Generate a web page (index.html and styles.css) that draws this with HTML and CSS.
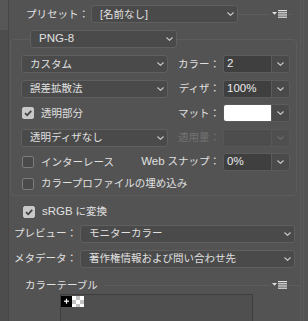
FILE: index.html
```html
<!DOCTYPE html>
<html lang="ja">
<head>
    <meta charset="UTF-8">
    <meta name="viewport" content="width=device-width, initial-scale=1.0">
    <title>最適化設定</title>
    <link rel="stylesheet" href="styles.css">
</head>
<body>
    <div class="edge-left"><div class="thumb"></div></div>

    <div class="main">
        <!-- プリセット -->
        <div class="preset-row">
            <span class="label preset-label">プリセット：</span>
            <div class="select preset-select">
                <span>[名前なし]</span>
                <svg class="chev" width="7" height="4" viewBox="0 0 7 4"><polyline points="0.5,0.5 3.5,3.3 6.5,0.5"/></svg>
            </div>
            <div class="rule rule-top">
                <svg class="menu" width="15" height="8" viewBox="0 0 15 8"><polygon points="0,2 5,2 2.5,4.8"/><rect x="6" y="0" width="9" height="1.2"/><rect x="6" y="2.2" width="9" height="1.2"/><rect x="6" y="4.4" width="9" height="1.2"/><rect x="6" y="6.6" width="9" height="1.2"/></svg>
            </div>
        </div>

        <fieldset class="group">
            <legend class="select format-select">
                <span class="latin">PNG-8</span>
                <svg class="chev" width="7" height="4" viewBox="0 0 7 4"><polyline points="0.5,0.5 3.5,3.3 6.5,0.5"/></svg>
            </legend>
            <div class="group-body">
                <div class="row">
                    <div class="select wide">
                        <span>カスタム</span>
                        <svg class="chev" width="7" height="4" viewBox="0 0 7 4"><polyline points="0.5,0.5 3.5,3.3 6.5,0.5"/></svg>
                    </div>
                    <span class="label">カラー：</span>
                    <div class="combo">
                        <span class="field latin">2</span>
                        <span class="btn"><svg class="chev" width="7" height="4" viewBox="0 0 7 4"><polyline points="0.5,0.5 3.5,3.3 6.5,0.5"/></svg></span>
                    </div>
                </div>
                <div class="row">
                    <div class="select wide">
                        <span>誤差拡散法</span>
                        <svg class="chev" width="7" height="4" viewBox="0 0 7 4"><polyline points="0.5,0.5 3.5,3.3 6.5,0.5"/></svg>
                    </div>
                    <span class="label">ディザ：</span>
                    <div class="combo">
                        <span class="field latin">100%</span>
                        <span class="btn"><svg class="chev" width="7" height="4" viewBox="0 0 7 4"><polyline points="0.5,0.5 3.5,3.3 6.5,0.5"/></svg></span>
                    </div>
                </div>
                <div class="row">
                    <div class="check-item wide">
                        <span class="check on"><svg width="10" height="10" viewBox="0 0 10 10"><polyline points="2,5.2 4.2,7.3 8.2,2.8"/></svg></span>
                        <span>透明部分</span>
                    </div>
                    <span class="label">マット：</span>
                    <div class="combo">
                        <span class="field matte"></span>
                        <span class="btn"><svg class="chev" width="7" height="4" viewBox="0 0 7 4"><polyline points="0.5,0.5 3.5,3.3 6.5,0.5"/></svg></span>
                    </div>
                </div>
                <div class="row">
                    <div class="select wide">
                        <span>透明ディザなし</span>
                        <svg class="chev" width="7" height="4" viewBox="0 0 7 4"><polyline points="0.5,0.5 3.5,3.3 6.5,0.5"/></svg>
                    </div>
                    <span class="label disabled">適用量：</span>
                    <div class="combo disabled">
                        <span class="field"></span>
                        <span class="btn"><svg class="chev" width="7" height="4" viewBox="0 0 7 4"><polyline points="0.5,0.5 3.5,3.3 6.5,0.5"/></svg></span>
                    </div>
                </div>
                <div class="row">
                    <div class="check-item indent">
                        <span class="check"></span>
                        <span>インターレース</span>
                    </div>
                    <span class="label"><span class="latin">Web</span> スナップ：</span>
                    <div class="combo">
                        <span class="field latin">0%</span>
                        <span class="btn"><svg class="chev" width="7" height="4" viewBox="0 0 7 4"><polyline points="0.5,0.5 3.5,3.3 6.5,0.5"/></svg></span>
                    </div>
                </div>
                <div class="row row-tight">
                    <div class="check-item">
                        <span class="check"></span>
                        <span>カラープロファイルの埋め込み</span>
                    </div>
                </div>
            </div>
        </fieldset>

        <div class="row srgb-row">
            <div class="check-item">
                <span class="check on"><svg width="10" height="10" viewBox="0 0 10 10"><polyline points="2,5.2 4.2,7.3 8.2,2.8"/></svg></span>
                <span><span class="latin">sRGB</span> に変換</span>
            </div>
        </div>

        <div class="row field-row preview-row">
            <span class="label field-label">プレビュー：</span>
            <div class="select long">
                <span>モニターカラー</span>
                <svg class="chev" width="7" height="4" viewBox="0 0 7 4"><polyline points="0.5,0.5 3.5,3.3 6.5,0.5"/></svg>
            </div>
        </div>
        <div class="row field-row meta-row">
            <span class="label field-label">メタデータ：</span>
            <div class="select long">
                <span>著作権情報および問い合わせ先</span>
                <svg class="chev" width="7" height="4" viewBox="0 0 7 4"><polyline points="0.5,0.5 3.5,3.3 6.5,0.5"/></svg>
            </div>
        </div>

        <div class="table-head">
            <span class="table-title">カラーテーブル</span>
            <div class="rule rule-table">
                <svg class="menu" width="15" height="8" viewBox="0 0 15 8"><polygon points="0,2 5,2 2.5,4.8"/><rect x="6" y="0" width="9" height="1.2"/><rect x="6" y="2.2" width="9" height="1.2"/><rect x="6" y="4.4" width="9" height="1.2"/><rect x="6" y="6.6" width="9" height="1.2"/></svg>
            </div>
        </div>
        <div class="color-table">
            <span class="swatch black"><svg width="11" height="11" viewBox="0 0 11 11"><rect x="3" y="4.6" width="5" height="1.2"/><rect x="4.9" y="2.7" width="1.2" height="5"/></svg></span>
            <span class="swatch clear"></span>
        </div>
    </div>

    <div class="edge-right"></div>
</body>
</html>
```

FILE: styles.css
```css
* {
    box-sizing: border-box;
    margin: 0;
    padding: 0;
}

body {
    width: 308px;
    height: 321px;
    overflow: hidden;
    display: flex;
    background: #535353;
    color: #e0e0e0;
    font-family: "Liberation Sans", "Noto Sans CJK JP", sans-serif;
    font-size: 10.5px;
    line-height: 1;
}

.latin {
    font-size: 11.5px;
}

.edge-left {
    width: 9px;
    flex: none;
    background: #4d4d4d;
    border-right: 1px solid #464646;
}

.edge-left .thumb {
    height: 30px;
    background: #575757;
}

.edge-right {
    width: 8px;
    flex: none;
    border-left: 1px solid #5b5b5b;
    background: linear-gradient(to right, transparent 2px, #5a5a5a 2px, #5a5a5a 3px, transparent 3px);
}

.main {
    flex: 1;
    min-width: 0;
    padding-top: 5px;
}

/* generic controls */
.label {
    white-space: nowrap;
}

.label.disabled {
    color: #727272;
}

.select {
    display: flex;
    align-items: center;
    justify-content: space-between;
    height: 18px;
    padding: 0 3px 0 8px;
    background: #4a4a4a;
    border: 1px solid #5f5f5f;
    border-radius: 3px;
    white-space: nowrap;
}

.chev {
    flex: none;
    fill: none;
    stroke: #cfcfcf;
    stroke-width: 1.1;
}

.combo {
    display: flex;
    width: 67px;
    height: 18px;
    flex: none;
    border: 1px solid #5b5b5b;
    border-radius: 3px;
    overflow: hidden;
}

.combo .field {
    flex: 1;
    display: flex;
    align-items: center;
    padding-left: 3px;
    background: #3f3f3f;
    color: #ececec;
}

.combo .field.matte {
    background: #ffffff;
}

.combo .btn {
    width: 18px;
    flex: none;
    display: flex;
    align-items: center;
    justify-content: center;
    background: #4a4a4a;
    border-left: 1px solid #5b5b5b;
}

.combo.disabled {
    border-color: #575757;
}

.combo.disabled .field {
    background: #4d4d4d;
}

.combo.disabled .btn {
    border-left-color: #575757;
    background: #4f4f4f;
}

.combo.disabled .chev {
    stroke: #6c6c6c;
}

.check-item {
    display: flex;
    align-items: center;
    gap: 7px;
    white-space: nowrap;
}

.check {
    width: 12px;
    height: 12px;
    flex: none;
    border: 1px solid #7c7c7c;
    border-radius: 2px;
    background: #4a4a4a;
}

.check.on {
    display: flex;
    align-items: center;
    justify-content: center;
    background: #c8c8c8;
    border-color: #c8c8c8;
}

.check.on svg {
    fill: none;
    stroke: #424242;
    stroke-width: 1.8;
}

/* rule with panel menu */
.rule {
    display: flex;
    align-items: center;
}

.rule::before,
.rule::after {
    content: "";
    height: 1px;
    background: #5d5d5d;
}

.rule::before {
    flex: 1;
}

.rule::after {
    width: 4px;
}

.menu {
    flex: none;
    fill: #e2e2e2;
    margin: 0 1px 0 2px;
}

/* preset */
.preset-row {
    display: flex;
    align-items: center;
    height: 18px;
}

.preset-label {
    width: 80px;
    text-align: right;
    margin-right: 2px;
}

.preset-select {
    width: 147px;
    flex: none;
}

.rule-top {
    flex: 1;
    margin: 0 8px 0 1px;
}

/* optimize group */
.group {
    margin: 7px 3px 0 1px;
    padding: 7px 6px 2.5px 10px;
    min-width: 0;
    border: 1px solid #5c5c5c;
    border-radius: 4px;
}

.format-select {
    width: 147px;
    margin-left: 9px;
}

.group-body {
    display: flex;
    flex-direction: column;
    gap: 6.5px;
}

.row {
    display: flex;
    align-items: center;
    height: 18px;
}

.row .wide {
    width: 147px;
    flex: none;
}

.row .check-item.wide,
.row .check-item.indent {
    padding-left: 1px;
}

.row-tight {
    margin-top: -3px;
    padding-left: 1px;
}

.row > .label {
    flex: 1;
    text-align: right;
    margin-right: 3px;
}

/* lower settings */
.srgb-row {
    margin-top: 6.5px;
    padding-left: 14px;
}

.preview-row {
    margin-top: 4px;
}

.meta-row {
    margin-top: 7px;
}

.field-row {
    margin-right: 5px;
}

.row > .field-label {
    flex: none;
    width: 68px;
}

.select.long {
    flex: 1;
}

/* color table */
.table-head {
    display: flex;
    align-items: center;
    height: 18px;
    margin-top: 8.5px;
    padding-left: 16px;
}

.rule-table {
    flex: 1;
    margin-left: 6px;
}

.rule-table::after {
    width: 12px;
}

.color-table {
    display: flex;
    align-items: flex-start;
    width: 193px;
    height: 40px;
    margin-left: 51px;
    padding-top: 1px;
    background: #4f4f4f;
    border: 1px solid #3e3e3e;
}

.swatch {
    width: 11px;
    height: 11px;
}

.swatch.black {
    background: #000000;
    fill: #ffffff;
}

.swatch.clear {
    width: 12px;
    background: conic-gradient(#c4c4c4 25%, #ffffff 0 50%, #c4c4c4 0 75%, #ffffff 0) 0 0 / 8px 8px;
}
```
